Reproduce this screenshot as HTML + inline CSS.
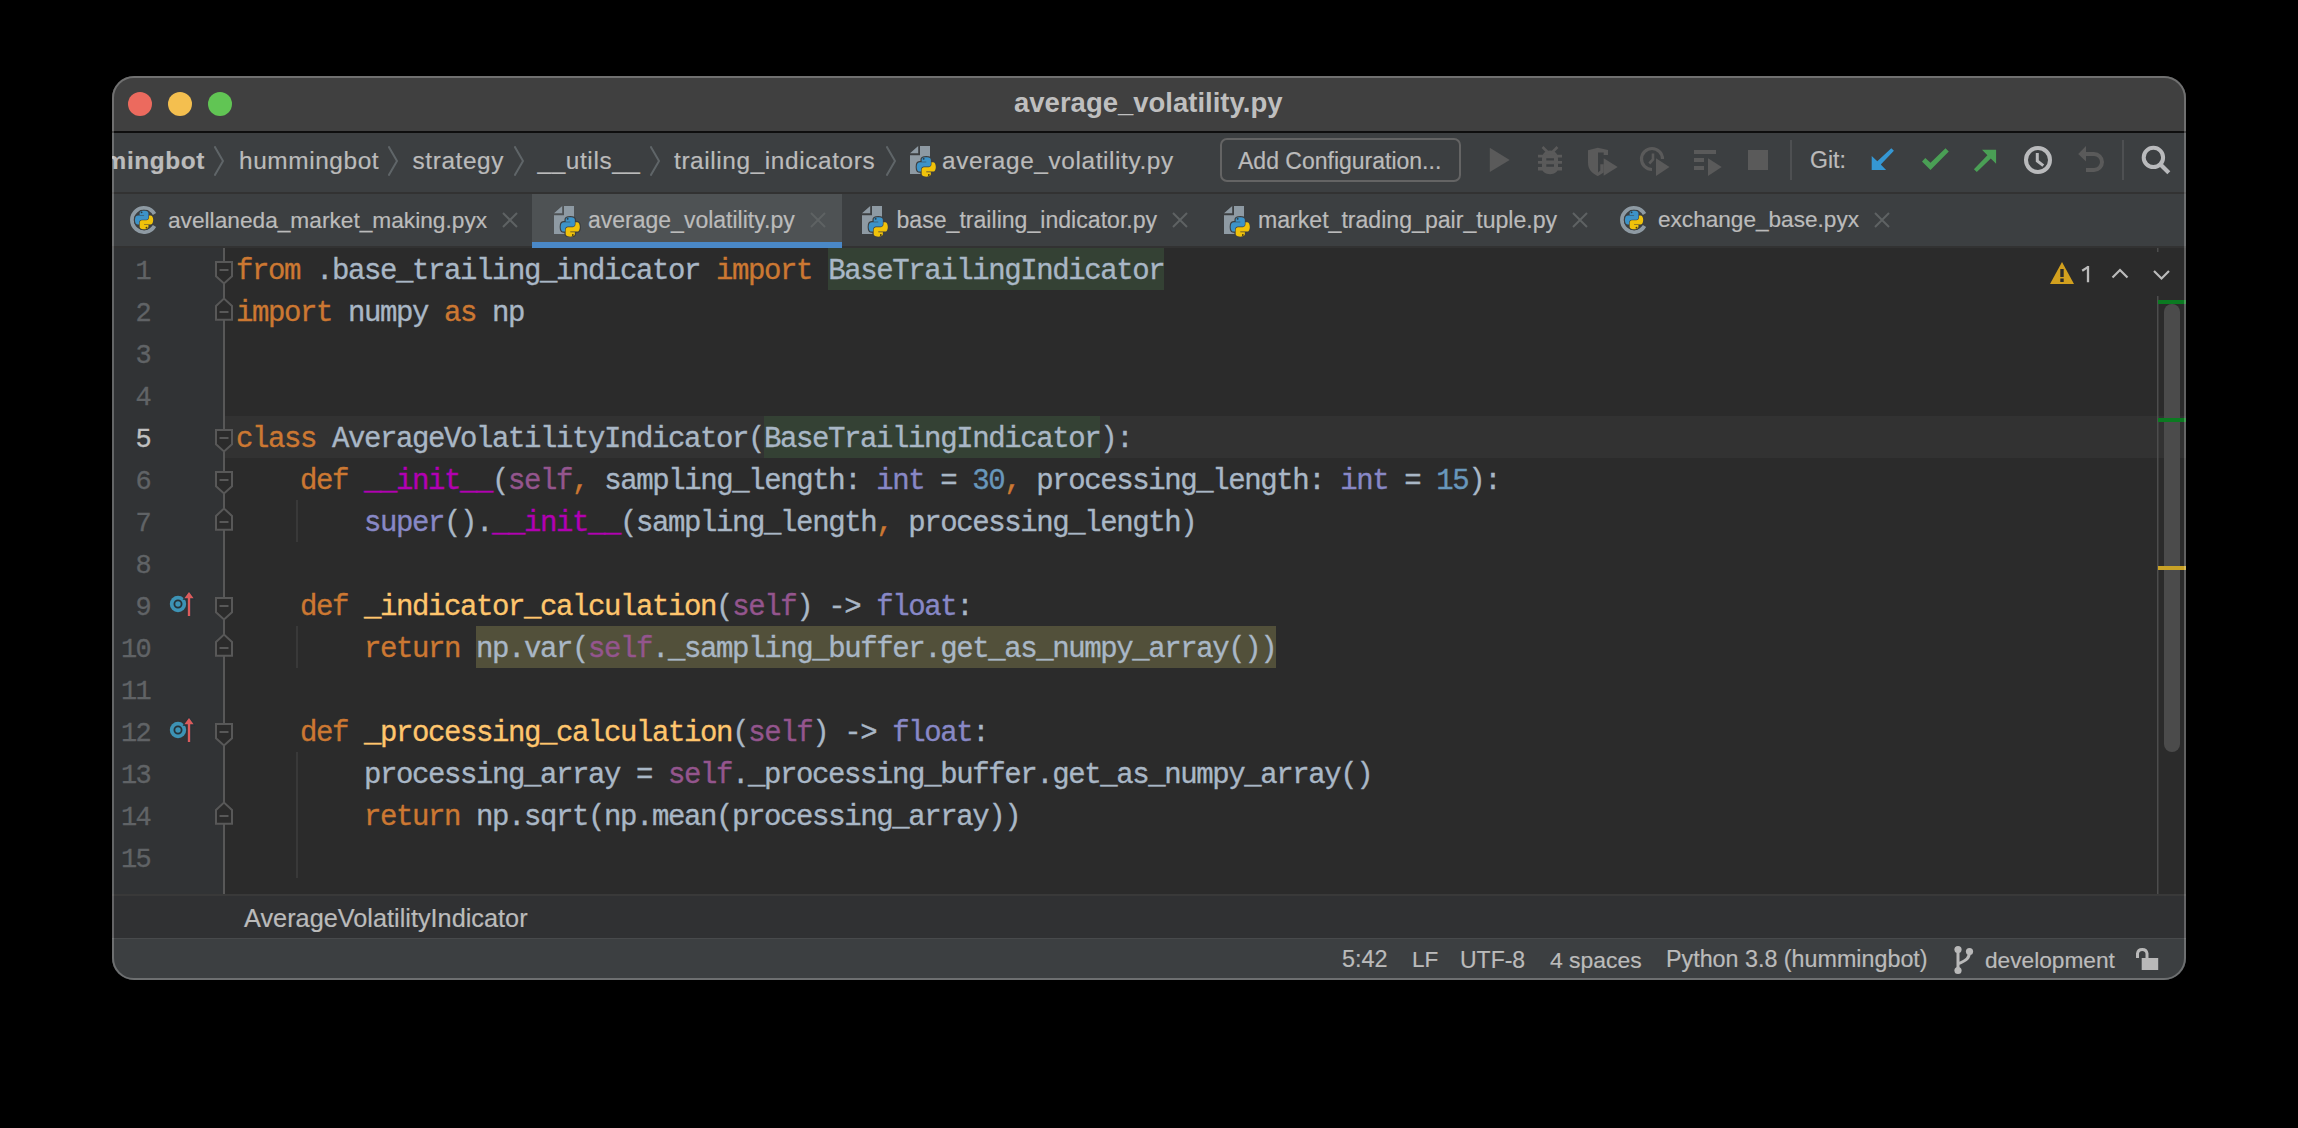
<!DOCTYPE html>
<html><head><meta charset="utf-8">
<style>
*{margin:0;padding:0;box-sizing:border-box}
html,body{width:2298px;height:1128px;background:#000;overflow:hidden}
body{position:relative;font-family:"Liberation Sans",sans-serif}
.abs{position:absolute}
#win{position:absolute;left:112px;top:76px;width:2074px;height:904px;border-radius:22px;overflow:hidden;background:#3c3f41}
#inner{position:absolute;left:-112px;top:-76px;width:2298px;height:1128px}
#frame{position:absolute;left:112px;top:76px;width:2074px;height:904px;border-radius:22px;border:2px solid rgba(255,255,255,0.25);pointer-events:none}
.t{position:absolute;white-space:pre;line-height:1;-webkit-text-stroke:0.2px currentColor}
.code{position:absolute;left:236px;-webkit-text-stroke:0.35px currentColor;font-family:"Liberation Mono",monospace;font-size:29px;letter-spacing:-1.4px;white-space:pre;color:#a9b7c6;height:42px;line-height:42px}
.ln{position:absolute;right:2148px;-webkit-text-stroke:0.3px currentColor;font-family:"Liberation Mono",monospace;font-size:27px;letter-spacing:-1.7px;white-space:pre;color:#606366;height:42px;line-height:42px;text-align:right}
.hl1{background:#344134;display:inline-block;height:42px}.hl2{background:#52503a;display:inline-block;height:42px}.ln.cur{color:#c0c0c0}
.kw{color:#cc7832}.fn{color:#ffc66d}.sf{color:#94558d}.mg{color:#b200b2}.bi{color:#8888c6}.nm{color:#6897bb}
</style></head><body>

<div id="win"><div id="inner">
  <!-- title bar -->
  <div class="abs" style="left:112px;top:76px;width:2074px;height:56px;background:#404040"></div>
  <div class="abs" style="left:112px;top:131px;width:2074px;height:2px;background:#0e0e0e"></div>
  <div class="abs" style="left:128px;top:92px;width:24px;height:24px;border-radius:50%;background:#ec6a5e"></div>
  <div class="abs" style="left:168px;top:92px;width:24px;height:24px;border-radius:50%;background:#f4bf4f"></div>
  <div class="abs" style="left:208px;top:92px;width:24px;height:24px;border-radius:50%;background:#61c554"></div>
  <div class="t" style="left:1014px;top:89px;font-size:27.5px;font-weight:bold;color:#bfbfbf;-webkit-text-stroke:0">average_volatility.py</div>

  <!-- navbar -->
  <div class="abs" style="left:112px;top:133px;width:2074px;height:59px;background:#3c3f41"></div>
  <div class="abs" style="left:112px;top:192px;width:2074px;height:2px;background:#323232"></div>


  <div class="t" style="right:2093px;top:148.5px;font-size:24.4px;letter-spacing:0.6px;font-weight:bold;color:#bbbbbb">hummingbot</div>
  <svg class="abs" style="left:214px;top:146px" width="10" height="30" viewBox="0 0 10 30">
<path fill="none" stroke="#5f6568" stroke-width="2" d="M0.5 0.3L9 15 0.5 29.7"/>
</svg>
  <div class="t" style="left:239px;top:148.5px;font-size:24.4px;letter-spacing:0.6px;color:#bbbbbb">hummingbot</div>
  <svg class="abs" style="left:388px;top:146px" width="10" height="30" viewBox="0 0 10 30">
<path fill="none" stroke="#5f6568" stroke-width="2" d="M0.5 0.3L9 15 0.5 29.7"/>
</svg>
  <div class="t" style="left:412.5px;top:148.5px;font-size:24.4px;letter-spacing:0.6px;color:#bbbbbb">strategy</div>
  <svg class="abs" style="left:514px;top:146px" width="10" height="30" viewBox="0 0 10 30">
<path fill="none" stroke="#5f6568" stroke-width="2" d="M0.5 0.3L9 15 0.5 29.7"/>
</svg>
  <div class="t" style="left:537.5px;top:148.5px;font-size:24.4px;letter-spacing:0.6px;color:#bbbbbb">__utils__</div>
  <svg class="abs" style="left:650px;top:146px" width="10" height="30" viewBox="0 0 10 30">
<path fill="none" stroke="#5f6568" stroke-width="2" d="M0.5 0.3L9 15 0.5 29.7"/>
</svg>
  <div class="t" style="left:674px;top:148.5px;font-size:24.4px;letter-spacing:0.6px;color:#bbbbbb">trailing_indicators</div>
  <svg class="abs" style="left:886px;top:146px" width="10" height="30" viewBox="0 0 10 30">
<path fill="none" stroke="#5f6568" stroke-width="2" d="M0.5 0.3L9 15 0.5 29.7"/>
</svg>
  <svg class="abs" style="left:910px;top:146px" width="30" height="31" viewBox="0 0 30 31">
<path fill="#8e9aa3" d="M0 7.3L8.2 0V7.3Z M10 0H20V28H0V9.3H10Z"/>
<svg x="5.2" y="9.9" width="22" height="22" viewBox="-8 -8 126 126">
<g stroke="#3c3f41" stroke-width="14" stroke-linejoin="round">
<path fill="#3d93c8" d="M54.9 0C50.3 0 46 .4 42.2 1.1 31 3.1 29 7.2 29 14.8V24.9H55.4V28.3H19.1C11.4 28.3 4.7 32.9 2.6 41.7.2 51.8.1 58.1 2.6 68.6 4.5 76.4 8.9 82 16.6 82H25.7V69.9C25.7 61.1 33.3 53.4 42.2 53.4H68.6C75.9 53.4 81.7 47.4 81.7 40.1V14.8C81.7 7.6 75.7 2.3 68.6 1.1 64 .3 59.3 0 54.9 0Z"/>
<path fill="#f0c20a" d="M85.1 28.3V40C85.1 49.1 77.4 56.7 68.6 56.7H42.2C35 56.7 29 62.9 29 70.1V95.4C29 102.6 35.3 106.8 42.2 108.8 50.6 111.3 58.6 111.7 68.6 108.8 75.3 106.9 81.7 103 81.7 95.4V85.3H55.4V81.9H94.9C102.6 81.9 105.4 76.6 108.1 68.6 110.8 60.4 110.7 52.6 108.1 42.2 106.2 34.7 102.6 28.3 94.9 28.3Z"/>
</g>
<path fill="#3d93c8" d="M54.9 0C50.3 0 46 .4 42.2 1.1 31 3.1 29 7.2 29 14.8V24.9H55.4V28.3H19.1C11.4 28.3 4.7 32.9 2.6 41.7.2 51.8.1 58.1 2.6 68.6 4.5 76.4 8.9 82 16.6 82H25.7V69.9C25.7 61.1 33.3 53.4 42.2 53.4H68.6C75.9 53.4 81.7 47.4 81.7 40.1V14.8C81.7 7.6 75.7 2.3 68.6 1.1 64 .3 59.3 0 54.9 0Z"/>
<path fill="#f0c20a" d="M85.1 28.3V40C85.1 49.1 77.4 56.7 68.6 56.7H42.2C35 56.7 29 62.9 29 70.1V95.4C29 102.6 35.3 106.8 42.2 108.8 50.6 111.3 58.6 111.7 68.6 108.8 75.3 106.9 81.7 103 81.7 95.4V85.3H55.4V81.9H94.9C102.6 81.9 105.4 76.6 108.1 68.6 110.8 60.4 110.7 52.6 108.1 42.2 106.2 34.7 102.6 28.3 94.9 28.3Z"/>
<circle cx="40.5" cy="9" r="5.5" fill="#2b3b45"/>
<circle cx="70" cy="101" r="5.5" fill="#4a3d10"/>
</svg>
</svg>
  <div class="t" style="left:942px;top:148.5px;font-size:24.4px;letter-spacing:0.6px;color:#bbbbbb">average_volatility.py</div>
  <div class="abs" style="left:1220px;top:138px;width:241px;height:44px;border:2px solid #646464;border-radius:7px"></div>
  <div class="t" style="left:1238px;top:149.5px;font-size:23px;color:#bbbbbb">Add Configuration...</div>


  <svg class="abs" style="left:0;top:0;overflow:visible" width="2298" height="1128">
    <path fill="#5a5a5a" d="M1489.8 147.8L1509.7 159.9 1489.8 172Z"/>
    <g transform="translate(1538 146)">
      <path stroke="#5a5a5a" stroke-width="2.6" d="M4.5 1L9.5 6M19.5 1L14.5 6"/>
      <path fill="#5a5a5a" d="M12 4.5C7.2 4.5 4 8 4 12.5V22C4 25.8 7.6 28.2 12 28.2 16.4 28.2 20 25.8 20 22V12.5C20 8 16.8 4.5 12 4.5Z"/>
      <path fill="#5a5a5a" d="M0 8.7H24V11.6H0ZM0 14.9H24V17.8H0ZM0 21.1H24V24.6H0Z"/>
      <path fill="#3c3f41" d="M8.3 12.3H16V14.6H8.3ZM8.3 18.2H16V20.8H8.3Z"/>
    </g>
    <g transform="translate(1588 147.8)">
      <path fill="#5a5a5a" d="M0 2.4L9.8 0 20 2.3V7.3H15.7V4.6H10V24.6L12.3 22.8V16.5H15.7V24.8L10 28.2H9.4C3.8 25.3 0 21.5 0 15Z"/>
      <path fill="#5a5a5a" d="M15.7 10.5L29.7 19.2 15.7 28Z"/>
    </g>
    <path fill="none" stroke="#5a5a5a" stroke-width="3.2" d="M1662.5 159A10.5 10.5 0 1 0 1652 169.5"/>
    <path fill="none" stroke="#5a5a5a" stroke-width="2.6" d="M1653 153.5V159.5L1649.3 163.5"/>
    <path fill="#5a5a5a" d="M1656 158.3L1669.5 167 1656 176Z"/>
    <path fill="#5a5a5a" d="M1694 150H1716V154H1694ZM1694 158H1704V162H1694ZM1694 166H1704V170H1694Z"/>
    <path fill="#5a5a5a" d="M1708 158.3L1721.7 167 1708 176Z"/>
    <path fill="#5a5a5a" d="M1748 150H1768V170H1748Z"/>
    <rect x="1790" y="140" width="2" height="40" fill="#4e5052"/>
    <rect x="2122" y="140" width="2" height="40" fill="#4e5052"/>
    <path fill="#3597d3" d="M1871.7 156V170H1886.1L1880.8 164.5 1893.9 150.8 1891.3 148.2 1877.3 161.2Z"/>
    <path fill="#4a9f55" d="M1922 161.5L1930.5 170 1948.8 151.4 1945.5 148.2 1930.5 162.8 1925.3 158Z"/>
    <path fill="#4a9f55" d="M1982 149.8H1996.1V163.8L1990.8 158.5 1976.8 172 1973.9 169.3 1987.4 155.2Z"/>
    <circle cx="2038" cy="160" r="12" fill="none" stroke="#b9babc" stroke-width="4"/>
    <path fill="none" stroke="#b9babc" stroke-width="3" d="M2037.3 153V161L2043.3 165.6"/>
    <path fill="#5a5a5a" d="M2078.2 154L2086 146.1V161.5Z"/>
    <path fill="none" stroke="#5a5a5a" stroke-width="4" d="M2085 154H2094A8 8 0 0 1 2094 170H2086"/>
    <circle cx="2153.4" cy="157.4" r="9.7" fill="none" stroke="#b9babc" stroke-width="4"/>
    <path stroke="#b9babc" stroke-width="4.2" d="M2160.5 164.5L2168.8 172.8"/>
  </svg>
  <div class="t" style="left:1810px;top:149px;font-size:23px;color:#bbbbbb">Git:</div>

  <!-- tab bar -->
  <div class="abs" style="left:112px;top:194px;width:2074px;height:52px;background:#3c3f41"></div>
  <div class="abs" style="left:112px;top:246px;width:2074px;height:2px;background:#323232"></div>
  <div class="abs" style="left:532px;top:194px;width:310px;height:48px;background:#4e5254"></div>
  <div class="abs" style="left:532px;top:242px;width:310px;height:6px;background:#4a88c7"></div>


  <svg class="abs" style="left:129px;top:205px" width="30" height="30" viewBox="0 0 30 30">
<path fill="none" stroke="#8e9aa3" stroke-width="3.8" d="M25.5 8.95A12.1 12.1 0 1 0 25.5 21.05"/>
<svg x="4.5" y="4.5" width="21" height="21" viewBox="-8 -8 126 126">
<g stroke="#3c3f41" stroke-width="14" stroke-linejoin="round">
<path fill="#3d93c8" d="M54.9 0C50.3 0 46 .4 42.2 1.1 31 3.1 29 7.2 29 14.8V24.9H55.4V28.3H19.1C11.4 28.3 4.7 32.9 2.6 41.7.2 51.8.1 58.1 2.6 68.6 4.5 76.4 8.9 82 16.6 82H25.7V69.9C25.7 61.1 33.3 53.4 42.2 53.4H68.6C75.9 53.4 81.7 47.4 81.7 40.1V14.8C81.7 7.6 75.7 2.3 68.6 1.1 64 .3 59.3 0 54.9 0Z"/>
<path fill="#f0c20a" d="M85.1 28.3V40C85.1 49.1 77.4 56.7 68.6 56.7H42.2C35 56.7 29 62.9 29 70.1V95.4C29 102.6 35.3 106.8 42.2 108.8 50.6 111.3 58.6 111.7 68.6 108.8 75.3 106.9 81.7 103 81.7 95.4V85.3H55.4V81.9H94.9C102.6 81.9 105.4 76.6 108.1 68.6 110.8 60.4 110.7 52.6 108.1 42.2 106.2 34.7 102.6 28.3 94.9 28.3Z"/>
</g>
<path fill="#3d93c8" d="M54.9 0C50.3 0 46 .4 42.2 1.1 31 3.1 29 7.2 29 14.8V24.9H55.4V28.3H19.1C11.4 28.3 4.7 32.9 2.6 41.7.2 51.8.1 58.1 2.6 68.6 4.5 76.4 8.9 82 16.6 82H25.7V69.9C25.7 61.1 33.3 53.4 42.2 53.4H68.6C75.9 53.4 81.7 47.4 81.7 40.1V14.8C81.7 7.6 75.7 2.3 68.6 1.1 64 .3 59.3 0 54.9 0Z"/>
<path fill="#f0c20a" d="M85.1 28.3V40C85.1 49.1 77.4 56.7 68.6 56.7H42.2C35 56.7 29 62.9 29 70.1V95.4C29 102.6 35.3 106.8 42.2 108.8 50.6 111.3 58.6 111.7 68.6 108.8 75.3 106.9 81.7 103 81.7 95.4V85.3H55.4V81.9H94.9C102.6 81.9 105.4 76.6 108.1 68.6 110.8 60.4 110.7 52.6 108.1 42.2 106.2 34.7 102.6 28.3 94.9 28.3Z"/>
<circle cx="40.5" cy="9" r="5.5" fill="#2b3b45"/>
<circle cx="70" cy="101" r="5.5" fill="#4a3d10"/>
</svg>
</svg>
  <div class="t" style="left:168px;top:209px;font-size:22.7px;color:#bbbbbb">avellaneda_market_making.pyx</div>
  <svg class="abs" style="left:502px;top:212px" width="16" height="16" viewBox="0 0 16 16">
<path stroke="#5e6263" stroke-width="2" d="M1 1L15 15M15 1L1 15"/>
</svg>
  <svg class="abs" style="left:554px;top:206px" width="30" height="31" viewBox="0 0 30 31">
<path fill="#8e9aa3" d="M0 7.3L8.2 0V7.3Z M10 0H20V28H0V9.3H10Z"/>
<svg x="5.2" y="9.9" width="22" height="22" viewBox="-8 -8 126 126">
<g stroke="#3c3f41" stroke-width="14" stroke-linejoin="round">
<path fill="#3d93c8" d="M54.9 0C50.3 0 46 .4 42.2 1.1 31 3.1 29 7.2 29 14.8V24.9H55.4V28.3H19.1C11.4 28.3 4.7 32.9 2.6 41.7.2 51.8.1 58.1 2.6 68.6 4.5 76.4 8.9 82 16.6 82H25.7V69.9C25.7 61.1 33.3 53.4 42.2 53.4H68.6C75.9 53.4 81.7 47.4 81.7 40.1V14.8C81.7 7.6 75.7 2.3 68.6 1.1 64 .3 59.3 0 54.9 0Z"/>
<path fill="#f0c20a" d="M85.1 28.3V40C85.1 49.1 77.4 56.7 68.6 56.7H42.2C35 56.7 29 62.9 29 70.1V95.4C29 102.6 35.3 106.8 42.2 108.8 50.6 111.3 58.6 111.7 68.6 108.8 75.3 106.9 81.7 103 81.7 95.4V85.3H55.4V81.9H94.9C102.6 81.9 105.4 76.6 108.1 68.6 110.8 60.4 110.7 52.6 108.1 42.2 106.2 34.7 102.6 28.3 94.9 28.3Z"/>
</g>
<path fill="#3d93c8" d="M54.9 0C50.3 0 46 .4 42.2 1.1 31 3.1 29 7.2 29 14.8V24.9H55.4V28.3H19.1C11.4 28.3 4.7 32.9 2.6 41.7.2 51.8.1 58.1 2.6 68.6 4.5 76.4 8.9 82 16.6 82H25.7V69.9C25.7 61.1 33.3 53.4 42.2 53.4H68.6C75.9 53.4 81.7 47.4 81.7 40.1V14.8C81.7 7.6 75.7 2.3 68.6 1.1 64 .3 59.3 0 54.9 0Z"/>
<path fill="#f0c20a" d="M85.1 28.3V40C85.1 49.1 77.4 56.7 68.6 56.7H42.2C35 56.7 29 62.9 29 70.1V95.4C29 102.6 35.3 106.8 42.2 108.8 50.6 111.3 58.6 111.7 68.6 108.8 75.3 106.9 81.7 103 81.7 95.4V85.3H55.4V81.9H94.9C102.6 81.9 105.4 76.6 108.1 68.6 110.8 60.4 110.7 52.6 108.1 42.2 106.2 34.7 102.6 28.3 94.9 28.3Z"/>
<circle cx="40.5" cy="9" r="5.5" fill="#2b3b45"/>
<circle cx="70" cy="101" r="5.5" fill="#4a3d10"/>
</svg>
</svg>
  <div class="t" style="left:588px;top:209px;font-size:23px;color:#bbbbbb">average_volatility.py</div>
  <svg class="abs" style="left:810px;top:212px" width="16" height="16" viewBox="0 0 16 16">
<path stroke="#5e6263" stroke-width="2" d="M1 1L15 15M15 1L1 15"/>
</svg>
  <svg class="abs" style="left:862px;top:206px" width="30" height="31" viewBox="0 0 30 31">
<path fill="#8e9aa3" d="M0 7.3L8.2 0V7.3Z M10 0H20V28H0V9.3H10Z"/>
<svg x="5.2" y="9.9" width="22" height="22" viewBox="-8 -8 126 126">
<g stroke="#3c3f41" stroke-width="14" stroke-linejoin="round">
<path fill="#3d93c8" d="M54.9 0C50.3 0 46 .4 42.2 1.1 31 3.1 29 7.2 29 14.8V24.9H55.4V28.3H19.1C11.4 28.3 4.7 32.9 2.6 41.7.2 51.8.1 58.1 2.6 68.6 4.5 76.4 8.9 82 16.6 82H25.7V69.9C25.7 61.1 33.3 53.4 42.2 53.4H68.6C75.9 53.4 81.7 47.4 81.7 40.1V14.8C81.7 7.6 75.7 2.3 68.6 1.1 64 .3 59.3 0 54.9 0Z"/>
<path fill="#f0c20a" d="M85.1 28.3V40C85.1 49.1 77.4 56.7 68.6 56.7H42.2C35 56.7 29 62.9 29 70.1V95.4C29 102.6 35.3 106.8 42.2 108.8 50.6 111.3 58.6 111.7 68.6 108.8 75.3 106.9 81.7 103 81.7 95.4V85.3H55.4V81.9H94.9C102.6 81.9 105.4 76.6 108.1 68.6 110.8 60.4 110.7 52.6 108.1 42.2 106.2 34.7 102.6 28.3 94.9 28.3Z"/>
</g>
<path fill="#3d93c8" d="M54.9 0C50.3 0 46 .4 42.2 1.1 31 3.1 29 7.2 29 14.8V24.9H55.4V28.3H19.1C11.4 28.3 4.7 32.9 2.6 41.7.2 51.8.1 58.1 2.6 68.6 4.5 76.4 8.9 82 16.6 82H25.7V69.9C25.7 61.1 33.3 53.4 42.2 53.4H68.6C75.9 53.4 81.7 47.4 81.7 40.1V14.8C81.7 7.6 75.7 2.3 68.6 1.1 64 .3 59.3 0 54.9 0Z"/>
<path fill="#f0c20a" d="M85.1 28.3V40C85.1 49.1 77.4 56.7 68.6 56.7H42.2C35 56.7 29 62.9 29 70.1V95.4C29 102.6 35.3 106.8 42.2 108.8 50.6 111.3 58.6 111.7 68.6 108.8 75.3 106.9 81.7 103 81.7 95.4V85.3H55.4V81.9H94.9C102.6 81.9 105.4 76.6 108.1 68.6 110.8 60.4 110.7 52.6 108.1 42.2 106.2 34.7 102.6 28.3 94.9 28.3Z"/>
<circle cx="40.5" cy="9" r="5.5" fill="#2b3b45"/>
<circle cx="70" cy="101" r="5.5" fill="#4a3d10"/>
</svg>
</svg>
  <div class="t" style="left:896.5px;top:209px;font-size:23.1px;color:#bbbbbb">base_trailing_indicator.py</div>
  <svg class="abs" style="left:1172px;top:212px" width="16" height="16" viewBox="0 0 16 16">
<path stroke="#5e6263" stroke-width="2" d="M1 1L15 15M15 1L1 15"/>
</svg>
  <svg class="abs" style="left:1224px;top:206px" width="30" height="31" viewBox="0 0 30 31">
<path fill="#8e9aa3" d="M0 7.3L8.2 0V7.3Z M10 0H20V28H0V9.3H10Z"/>
<svg x="5.2" y="9.9" width="22" height="22" viewBox="-8 -8 126 126">
<g stroke="#3c3f41" stroke-width="14" stroke-linejoin="round">
<path fill="#3d93c8" d="M54.9 0C50.3 0 46 .4 42.2 1.1 31 3.1 29 7.2 29 14.8V24.9H55.4V28.3H19.1C11.4 28.3 4.7 32.9 2.6 41.7.2 51.8.1 58.1 2.6 68.6 4.5 76.4 8.9 82 16.6 82H25.7V69.9C25.7 61.1 33.3 53.4 42.2 53.4H68.6C75.9 53.4 81.7 47.4 81.7 40.1V14.8C81.7 7.6 75.7 2.3 68.6 1.1 64 .3 59.3 0 54.9 0Z"/>
<path fill="#f0c20a" d="M85.1 28.3V40C85.1 49.1 77.4 56.7 68.6 56.7H42.2C35 56.7 29 62.9 29 70.1V95.4C29 102.6 35.3 106.8 42.2 108.8 50.6 111.3 58.6 111.7 68.6 108.8 75.3 106.9 81.7 103 81.7 95.4V85.3H55.4V81.9H94.9C102.6 81.9 105.4 76.6 108.1 68.6 110.8 60.4 110.7 52.6 108.1 42.2 106.2 34.7 102.6 28.3 94.9 28.3Z"/>
</g>
<path fill="#3d93c8" d="M54.9 0C50.3 0 46 .4 42.2 1.1 31 3.1 29 7.2 29 14.8V24.9H55.4V28.3H19.1C11.4 28.3 4.7 32.9 2.6 41.7.2 51.8.1 58.1 2.6 68.6 4.5 76.4 8.9 82 16.6 82H25.7V69.9C25.7 61.1 33.3 53.4 42.2 53.4H68.6C75.9 53.4 81.7 47.4 81.7 40.1V14.8C81.7 7.6 75.7 2.3 68.6 1.1 64 .3 59.3 0 54.9 0Z"/>
<path fill="#f0c20a" d="M85.1 28.3V40C85.1 49.1 77.4 56.7 68.6 56.7H42.2C35 56.7 29 62.9 29 70.1V95.4C29 102.6 35.3 106.8 42.2 108.8 50.6 111.3 58.6 111.7 68.6 108.8 75.3 106.9 81.7 103 81.7 95.4V85.3H55.4V81.9H94.9C102.6 81.9 105.4 76.6 108.1 68.6 110.8 60.4 110.7 52.6 108.1 42.2 106.2 34.7 102.6 28.3 94.9 28.3Z"/>
<circle cx="40.5" cy="9" r="5.5" fill="#2b3b45"/>
<circle cx="70" cy="101" r="5.5" fill="#4a3d10"/>
</svg>
</svg>
  <div class="t" style="left:1258px;top:209px;font-size:23.1px;color:#bbbbbb">market_trading_pair_tuple.py</div>
  <svg class="abs" style="left:1572px;top:212px" width="16" height="16" viewBox="0 0 16 16">
<path stroke="#5e6263" stroke-width="2" d="M1 1L15 15M15 1L1 15"/>
</svg>
  <svg class="abs" style="left:1619px;top:205px" width="30" height="30" viewBox="0 0 30 30">
<path fill="none" stroke="#8e9aa3" stroke-width="3.8" d="M25.5 8.95A12.1 12.1 0 1 0 25.5 21.05"/>
<svg x="4.5" y="4.5" width="21" height="21" viewBox="-8 -8 126 126">
<g stroke="#3c3f41" stroke-width="14" stroke-linejoin="round">
<path fill="#3d93c8" d="M54.9 0C50.3 0 46 .4 42.2 1.1 31 3.1 29 7.2 29 14.8V24.9H55.4V28.3H19.1C11.4 28.3 4.7 32.9 2.6 41.7.2 51.8.1 58.1 2.6 68.6 4.5 76.4 8.9 82 16.6 82H25.7V69.9C25.7 61.1 33.3 53.4 42.2 53.4H68.6C75.9 53.4 81.7 47.4 81.7 40.1V14.8C81.7 7.6 75.7 2.3 68.6 1.1 64 .3 59.3 0 54.9 0Z"/>
<path fill="#f0c20a" d="M85.1 28.3V40C85.1 49.1 77.4 56.7 68.6 56.7H42.2C35 56.7 29 62.9 29 70.1V95.4C29 102.6 35.3 106.8 42.2 108.8 50.6 111.3 58.6 111.7 68.6 108.8 75.3 106.9 81.7 103 81.7 95.4V85.3H55.4V81.9H94.9C102.6 81.9 105.4 76.6 108.1 68.6 110.8 60.4 110.7 52.6 108.1 42.2 106.2 34.7 102.6 28.3 94.9 28.3Z"/>
</g>
<path fill="#3d93c8" d="M54.9 0C50.3 0 46 .4 42.2 1.1 31 3.1 29 7.2 29 14.8V24.9H55.4V28.3H19.1C11.4 28.3 4.7 32.9 2.6 41.7.2 51.8.1 58.1 2.6 68.6 4.5 76.4 8.9 82 16.6 82H25.7V69.9C25.7 61.1 33.3 53.4 42.2 53.4H68.6C75.9 53.4 81.7 47.4 81.7 40.1V14.8C81.7 7.6 75.7 2.3 68.6 1.1 64 .3 59.3 0 54.9 0Z"/>
<path fill="#f0c20a" d="M85.1 28.3V40C85.1 49.1 77.4 56.7 68.6 56.7H42.2C35 56.7 29 62.9 29 70.1V95.4C29 102.6 35.3 106.8 42.2 108.8 50.6 111.3 58.6 111.7 68.6 108.8 75.3 106.9 81.7 103 81.7 95.4V85.3H55.4V81.9H94.9C102.6 81.9 105.4 76.6 108.1 68.6 110.8 60.4 110.7 52.6 108.1 42.2 106.2 34.7 102.6 28.3 94.9 28.3Z"/>
<circle cx="40.5" cy="9" r="5.5" fill="#2b3b45"/>
<circle cx="70" cy="101" r="5.5" fill="#4a3d10"/>
</svg>
</svg>
  <div class="t" style="left:1658px;top:209px;font-size:22.6px;color:#bbbbbb">exchange_base.pyx</div>
  <svg class="abs" style="left:1874px;top:212px" width="16" height="16" viewBox="0 0 16 16">
<path stroke="#5e6263" stroke-width="2" d="M1 1L15 15M15 1L1 15"/>
</svg>

  <!-- editor -->
  <div class="abs" style="left:112px;top:248px;width:111px;height:646px;background:#313335"></div>
  <div class="abs" style="left:225px;top:248px;width:1961px;height:646px;background:#2b2b2b"></div>
  <div class="abs" style="left:225px;top:416px;width:1961px;height:42px;background:#323232"></div>
  <div class="abs" style="left:223px;top:248px;width:2px;height:646px;background:#585858"></div>

  <!-- code -->
  <div class="abs" style="left:828px;top:248px;width:336px;height:42px;background:#344134"></div>
  <div class="abs" style="left:764px;top:416px;width:336px;height:42px;background:#344134"></div>
  <div class="abs" style="left:476px;top:626px;width:800px;height:42px;background:#52503a"></div>
  <div class="ln" style="top:250.5px">1</div>
  <div class="code" style="top:250.5px"><span class="kw">from</span> .base_trailing_indicator <span class="kw">import</span> BaseTrailingIndicator</div>
  <div class="ln" style="top:292.5px">2</div>
  <div class="code" style="top:292.5px"><span class="kw">import</span> numpy <span class="kw">as</span> np</div>
  <div class="ln" style="top:334.5px">3</div>
  <div class="ln" style="top:376.5px">4</div>
  <div class="ln cur" style="top:418.5px">5</div>
  <div class="code" style="top:418.5px"><span class="kw">class</span> AverageVolatilityIndicator(BaseTrailingIndicator):</div>
  <div class="ln" style="top:460.5px">6</div>
  <div class="code" style="top:460.5px">    <span class="kw">def</span> <span class="mg">__init__</span>(<span class="sf">self</span><span class="kw">,</span> sampling_length: <span class="bi">int</span> = <span class="nm">30</span><span class="kw">,</span> processing_length: <span class="bi">int</span> = <span class="nm">15</span>):</div>
  <div class="ln" style="top:502.5px">7</div>
  <div class="code" style="top:502.5px">        <span class="bi">super</span>().<span class="mg">__init__</span>(sampling_length<span class="kw">,</span> processing_length)</div>
  <div class="ln" style="top:544.5px">8</div>
  <div class="ln" style="top:586.5px">9</div>
  <div class="code" style="top:586.5px">    <span class="kw">def</span> <span class="fn">_indicator_calculation</span>(<span class="sf">self</span>) -&gt; <span class="bi">float</span>:</div>
  <div class="ln" style="top:628.5px">10</div>
  <div class="code" style="top:628.5px">        <span class="kw">return</span> np.var(<span class="sf">self</span>._sampling_buffer.get_as_numpy_array())</div>
  <div class="ln" style="top:670.5px">11</div>
  <div class="ln" style="top:712.5px">12</div>
  <div class="code" style="top:712.5px">    <span class="kw">def</span> <span class="fn">_processing_calculation</span>(<span class="sf">self</span>) -&gt; <span class="bi">float</span>:</div>
  <div class="ln" style="top:754.5px">13</div>
  <div class="code" style="top:754.5px">        processing_array = <span class="sf">self</span>._processing_buffer.get_as_numpy_array()</div>
  <div class="ln" style="top:796.5px">14</div>
  <div class="code" style="top:796.5px">        <span class="kw">return</span> np.sqrt(np.mean(processing_array))</div>
  <div class="ln" style="top:838.5px">15</div>


  <svg class="abs" style="left:0;top:0;overflow:visible" width="2298" height="1128">
    <path d="M216 262H232V276.3L224 283.5L216 276.3Z" fill="#2b2b2b" stroke="#585858" stroke-width="2"/><path d="M219.5 270H228.5" stroke="#585858" stroke-width="2"/><path d="M216 430H232V444.3L224 451.5L216 444.3Z" fill="#2b2b2b" stroke="#585858" stroke-width="2"/><path d="M219.5 438H228.5" stroke="#585858" stroke-width="2"/><path d="M216 472H232V486.3L224 493.5L216 486.3Z" fill="#2b2b2b" stroke="#585858" stroke-width="2"/><path d="M219.5 480H228.5" stroke="#585858" stroke-width="2"/><path d="M216 598H232V612.3L224 619.5L216 612.3Z" fill="#2b2b2b" stroke="#585858" stroke-width="2"/><path d="M219.5 606H228.5" stroke="#585858" stroke-width="2"/><path d="M216 724H232V738.3L224 745.5L216 738.3Z" fill="#2b2b2b" stroke="#585858" stroke-width="2"/><path d="M219.5 732H228.5" stroke="#585858" stroke-width="2"/><path d="M216 319.8H232V306L224 298.5L216 306Z" fill="#2b2b2b" stroke="#585858" stroke-width="2"/><path d="M219.5 312H228.5" stroke="#585858" stroke-width="2"/><path d="M216 529.8H232V516L224 508.5L216 516Z" fill="#2b2b2b" stroke="#585858" stroke-width="2"/><path d="M219.5 522H228.5" stroke="#585858" stroke-width="2"/><path d="M216 655.8H232V642L224 634.5L216 642Z" fill="#2b2b2b" stroke="#585858" stroke-width="2"/><path d="M219.5 648H228.5" stroke="#585858" stroke-width="2"/><path d="M216 823.8H232V810L224 802.5L216 810Z" fill="#2b2b2b" stroke="#585858" stroke-width="2"/><path d="M219.5 816H228.5" stroke="#585858" stroke-width="2"/>
    <circle cx="178" cy="604" r="8.2" fill="#3d93b5"/><circle cx="178" cy="604" r="3.6" fill="none" stroke="#263238" stroke-width="1.8"/><path d="M189 598.5V616" stroke="#263238" stroke-width="4.5"/><path d="M184 599L189 591.5L194 599Z" fill="#263238" stroke="#263238" stroke-width="1.5"/><path d="M189 598V616" stroke="#db5c5c" stroke-width="2.4"/><path d="M184.4 598.3L189 592L193.6 598.3Z" fill="#db5c5c"/><circle cx="178" cy="730" r="8.2" fill="#3d93b5"/><circle cx="178" cy="730" r="3.6" fill="none" stroke="#263238" stroke-width="1.8"/><path d="M189 724.5V742" stroke="#263238" stroke-width="4.5"/><path d="M184 725L189 717.5L194 725Z" fill="#263238" stroke="#263238" stroke-width="1.5"/><path d="M189 724V742" stroke="#db5c5c" stroke-width="2.4"/><path d="M184.4 724.3L189 718L193.6 724.3Z" fill="#db5c5c"/>
    <rect x="296" y="500" width="2" height="42" fill="#393939"/>
    <rect x="296" y="626" width="2" height="42" fill="#393939"/>
    <rect x="296" y="752" width="2" height="126" fill="#393939"/>
    <rect x="2157" y="296" width="1.5" height="598" fill="#4d4d4d"/>
    <rect x="2157" y="248" width="1.5" height="4" fill="#4d4d4d"/>
    <rect x="2164" y="304" width="16" height="448" rx="8" fill="#4b4b4b"/>
    <rect x="2158" y="300" width="28" height="4" fill="#0b7a21"/>
    <rect x="2158" y="418" width="28" height="4" fill="#0b7a21"/>
    <rect x="2158" y="566" width="28" height="4" fill="#c9a226"/>
    <path d="M2062 262L2074 284H2050Z" fill="#d2a01e"/>
    <path d="M2060.3 269H2063.7V277H2060.3ZM2060.3 278.5H2063.7V282H2060.3Z" fill="#2b2b2b"/>
    <path d="M2112.5 277.5L2120 270L2127.5 277.5" fill="none" stroke="#bbbbbb" stroke-width="2.2"/>
    <path d="M2154 271L2161.5 278.5L2169 271" fill="none" stroke="#bbbbbb" stroke-width="2.2"/>
  </svg>
  <svg class="abs" style="left:0;top:0;overflow:visible" width="2298" height="1128"><path d="M2088 266V282.2M2088.6 266.6L2082.2 270.8" fill="none" stroke="#bbbbbb" stroke-width="2.3"/></svg>

  <!-- bottom breadcrumbs -->
  <div class="abs" style="left:112px;top:894px;width:2074px;height:2px;background:#393939"></div>
  <div class="abs" style="left:112px;top:896px;width:2074px;height:42px;background:#303133"></div>
  <div class="abs" style="left:112px;top:938px;width:2074px;height:1px;background:#484a4c"></div>
  <div class="abs" style="left:112px;top:939px;width:2074px;height:41px;background:#3c3f41"></div>
  <div class="t" style="left:244px;top:906px;font-size:25.3px;color:#bbbbbb">AverageVolatilityIndicator</div>

  <div class="t" style="left:1342px;top:948.2px;font-size:23.4px;color:#bbbbbb">5:42</div>
  <div class="t" style="left:1412px;top:948.5px;font-size:22.5px;color:#bbbbbb">LF</div>
  <div class="t" style="left:1460px;top:948.5px;font-size:23px;color:#bbbbbb">UTF-8</div>
  <div class="t" style="left:1550px;top:948.5px;font-size:22.9px;color:#bbbbbb">4 spaces</div>
  <div class="t" style="left:1666px;top:948.3px;font-size:23.3px;color:#bbbbbb">Python 3.8 (hummingbot)</div>
  <div class="t" style="left:1985px;top:948.5px;font-size:22.7px;color:#bbbbbb">development</div>
  <svg class="abs" style="left:0;top:0;overflow:visible" width="2298" height="1128">
    <g fill="#b9b9b9" stroke="none">
      <circle cx="1958" cy="949.5" r="3.6"/><circle cx="1958" cy="970.5" r="3.6"/><circle cx="1969.5" cy="951.5" r="3.6"/>
    </g>
    <path d="M1958 949.5V970.5M1969.5 951.5C1969.5 958 1967 960 1958 964" fill="none" stroke="#b9b9b9" stroke-width="3"/>
    <path d="M2137.5 958V953.5A4.8 4.8 0 0 1 2147 953.5V958" fill="none" stroke="#b9b9b9" stroke-width="3"/>
    <rect x="2141.7" y="958" width="16.5" height="12" fill="#b9b9b9"/>
  </svg>
</div></div>
<div id="frame"></div>
</body></html>
